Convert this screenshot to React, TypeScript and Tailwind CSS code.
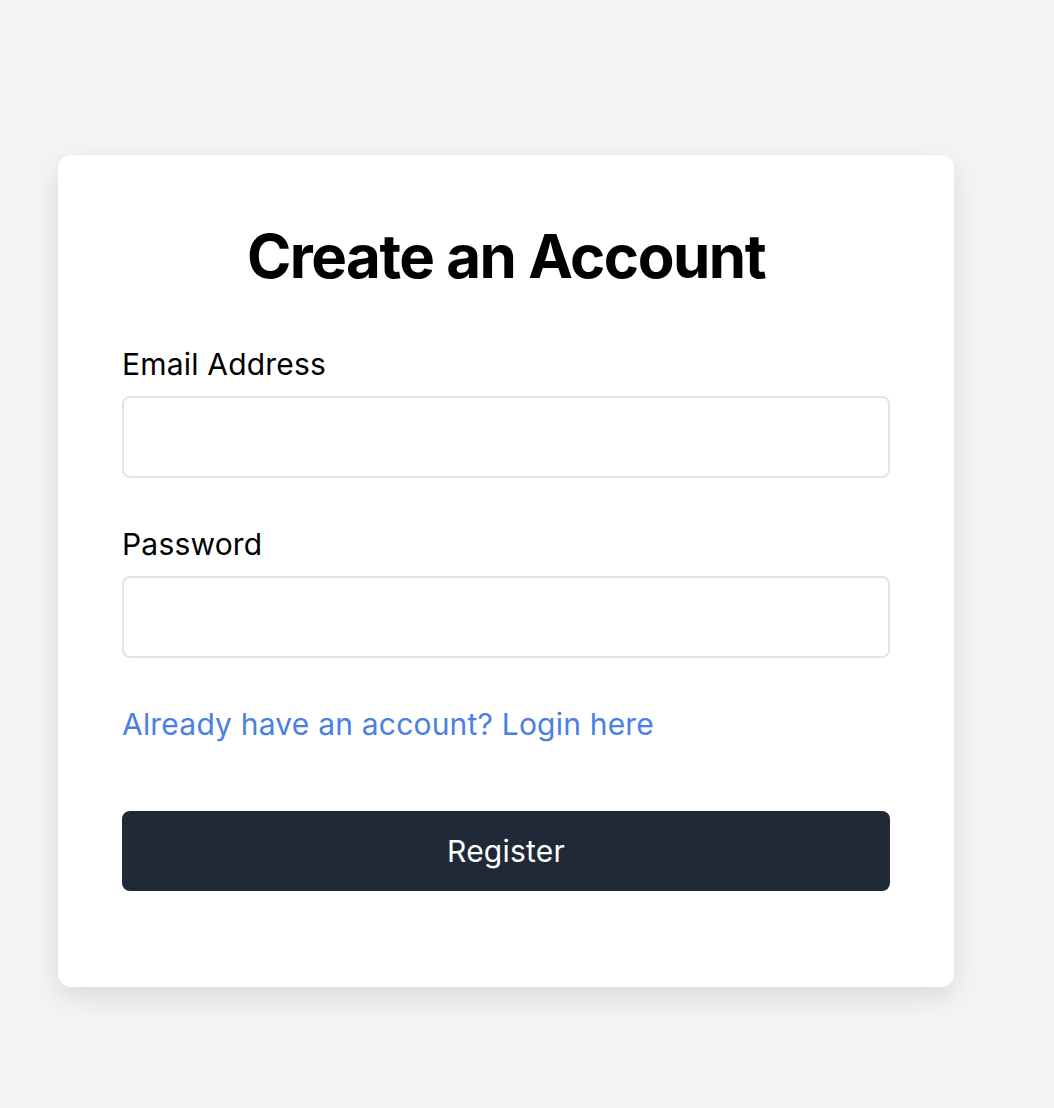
import React from "react";

export default function App() {
  return (
    <div className="min-h-screen bg-[#f4f4f4] pt-[155px] pl-[58px] font-['Inter','Liberation_Sans',sans-serif]">
      {/* Register card */}
      <div className="w-[896px] rounded-[13px] bg-white px-16 pt-[71px] pb-[96px] shadow-[0_10px_28px_rgba(0,0,0,0.11)]">
        <h1 className="text-center text-[60px] leading-[60px] font-bold tracking-[-1.5px] text-black">
          Create an Account
        </h1>

        <form className="mt-[60px] flex flex-col tracking-[0.2px]" onSubmit={(e) => e.preventDefault()}>
          <Field label="Email Address" type="email" />
          <div className="mt-12">
            <Field label="Password" type="password" />
          </div>

          <a href="#" className="mt-12 self-start text-[30px] leading-[36px] text-[#4a80e2]">
            Already have an account? Login here
          </a>

          <button
            type="submit"
            className="mt-[69px] flex h-[80px] items-center justify-center rounded-lg bg-[#1f2937] text-[30px] text-white"
          >
            Register
          </button>
        </form>
      </div>
    </div>
  );
}

function Field({ label, type }: { label: string; type: string }) {
  return (
    <label className="flex flex-col">
      <span className="text-[30px] leading-[36px] text-black">{label}</span>
      <input
        type={type}
        className="mt-[14px] h-[82px] rounded-lg border-2 border-[#e3e3e3] bg-white px-4 text-[30px] outline-none"
      />
    </label>
  );
}
